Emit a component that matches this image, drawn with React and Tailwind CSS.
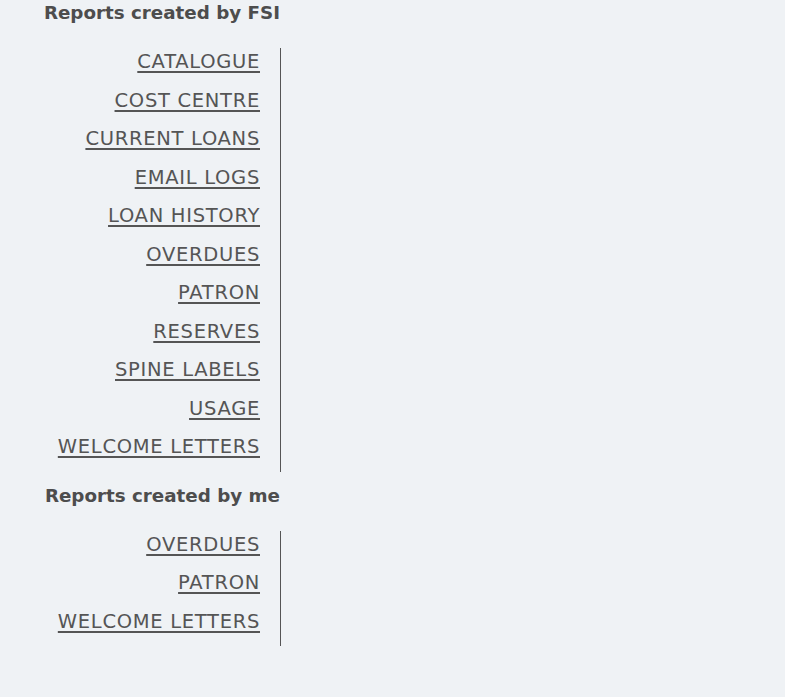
const FSI = [
  'CATALOGUE',
  'COST CENTRE',
  'CURRENT LOANS',
  'EMAIL LOGS',
  'LOAN HISTORY',
  'OVERDUES',
  'PATRON',
  'RESERVES',
  'SPINE LABELS',
  'USAGE',
  'WELCOME LETTERS',
]

const MINE = ['OVERDUES', 'PATRON', 'WELCOME LETTERS']

function ReportList({ items }) {
  return (
    <ul className="w-[281px] border-r border-[#555] pr-5 text-right">
      {items.map((r, i) => (
        <li key={i} className="h-[38.5px] pb-[11px] leading-[27.5px]">
          <a
            href="#"
            className="text-[19.5px] font-normal tracking-[0.7px] text-[#555] underline decoration-[1.5px] underline-offset-[3px]"
          >
            {r}
          </a>
        </li>
      ))}
    </ul>
  )
}

export default function App() {
  return (
    <div
      className="min-h-[697px] bg-[#eff2f5] text-[#4d4d4d]"
      style={{ fontFamily: '"DejaVu Sans", sans-serif' }}
    >
      <div className="w-[281px]">
        <h2 className="pt-[1px] pr-[1px] text-right text-[18.3px] font-bold leading-[24px]">Reports created by FSI</h2>
        <div className="mt-[23px]">
          <ReportList items={FSI} />
        </div>
        <h2 className="mt-[12px] pr-[1px] text-right text-[18.3px] font-bold leading-[24px]">Reports created by me</h2>
        <div className="mt-[23px]">
          <ReportList items={MINE} />
        </div>
      </div>
    </div>
  )
}
